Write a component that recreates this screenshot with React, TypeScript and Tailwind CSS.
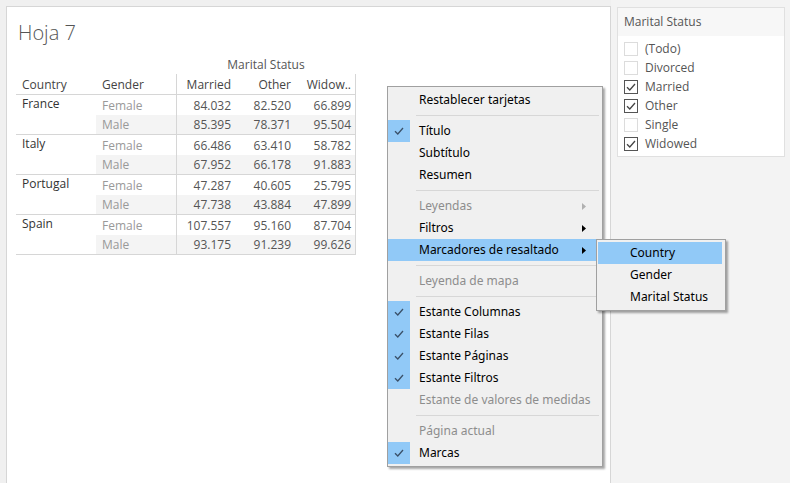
import React from "react";

const rows = [
  { country: "France", data: [["Female", "84.032", "82.520", "66.899"], ["Male", "85.395", "78.371", "95.504"]] },
  { country: "Italy", data: [["Female", "66.486", "63.410", "58.782"], ["Male", "67.952", "66.178", "91.883"]] },
  { country: "Portugal", data: [["Female", "47.287", "40.605", "25.795"], ["Male", "47.738", "43.884", "47.899"]] },
  { country: "Spain", data: [["Female", "107.557", "95.160", "87.704"], ["Male", "93.175", "91.239", "99.626"]] },
];

function Check({ className = "" }: { className?: string }) {
  return (
    <svg width="10" height="8" viewBox="0 0 10 8" className={className}>
      <path d="M1 4.2 L3.8 7 L9 1" fill="none" stroke="currentColor" strokeWidth="1.3" />
    </svg>
  );
}

function Arrow({ gray }: { gray?: boolean }) {
  return (
    <svg width="4" height="7" viewBox="0 0 4 7" className={gray ? "text-[#b0b0b0]" : "text-[#000]"}>
      <path d="M0 0 L4 3.5 L0 7 Z" fill="currentColor" />
    </svg>
  );
}

type Item =
  | { sep: true }
  | { label: string; checked?: boolean; disabled?: boolean; arrow?: boolean; active?: boolean; sep?: false };

const menu: Item[] = [
  { label: "Restablecer tarjetas" },
  { sep: true },
  { label: "Título", checked: true },
  { label: "Subtítulo" },
  { label: "Resumen" },
  { sep: true },
  { label: "Leyendas", disabled: true, arrow: true },
  { label: "Filtros", arrow: true },
  { label: "Marcadores de resaltado", arrow: true, active: true },
  { sep: true },
  { label: "Leyenda de mapa", disabled: true },
  { sep: true },
  { label: "Estante Columnas", checked: true },
  { label: "Estante Filas", checked: true },
  { label: "Estante Páginas", checked: true },
  { label: "Estante Filtros", checked: true },
  { label: "Estante de valores de medidas", disabled: true },
  { sep: true },
  { label: "Página actual", disabled: true },
  { label: "Marcas", checked: true },
];

const filters = [
  { label: "(Todo)", checked: false },
  { label: "Divorced", checked: false },
  { label: "Married", checked: true },
  { label: "Other", checked: true },
  { label: "Single", checked: false },
  { label: "Widowed", checked: true },
];

export default function App() {
  const menuFont = { fontFamily: "'Noto Sans', 'Open Sans', sans-serif" };
  return (
    <div
      className="relative flex w-[790px] h-[483px] overflow-hidden bg-[#f0f0f0]"
      style={{ fontFamily: "'Open Sans', 'Noto Sans', sans-serif" }}
    >
      {/* Sheet */}
      <div className="ml-[6px] mt-[6px] w-[605px] h-[477px] shrink-0 bg-white border-l border-t border-r border-[#d6d6d6] pl-[9px]">
        <div className="pl-[2px] pt-[14px] h-[47px] text-[20px] leading-[24px] font-light text-[#555]">Hoja 7</div>
        <div className="w-[340px] text-[12px] leading-[20px]">
          {/* Marital status header */}
          <div className="flex h-[20px] leading-[22px]">
            <div className="w-[160px]" />
            <div className="w-[180px] text-center text-[#555]">Marital Status</div>
          </div>
          {/* Column headers */}
          <div className="flex h-[21px] leading-[22px] border-b border-[#d6d6d6]">
            <div className="w-[80px] pl-[6px] text-[#444]">Country</div>
            <div className="w-[80px] pl-[6px] text-[#444]">Gender</div>
            <div className="w-[60px] border-l border-[#d6d6d6] text-right pr-[5px] text-[#444]">Married</div>
            <div className="w-[60px] text-right pr-[5px] text-[#444]">Other</div>
            <div className="w-[60px] border-r border-[#d6d6d6] text-right pr-[4px] text-[#444]">Widow..</div>
          </div>
          {rows.map((r) => (
            <div key={r.country} className="flex h-[40px] border-b border-[#d6d6d6]">
              <div className="w-[80px] pl-[6px] text-[#333] leading-[18px]">{r.country}</div>
              <div className="flex flex-col">
                {r.data.map((d, i) => (
                  <div key={i} className={`flex ${i === 1 ? "h-[19px] bg-[#f4f4f4] leading-[20px]" : "h-[20px] leading-[21px]"}`}>
                    <div className="w-[80px] pl-[6px] text-[#999]">{d[0]}</div>
                    <div className="w-[60px] border-l border-[#d6d6d6] text-right pr-[5px] text-[#555]">{d[1]}</div>
                    <div className="w-[60px] text-right pr-[5px] text-[#555]">{d[2]}</div>
                    <div className="w-[60px] border-r border-[#d6d6d6] text-right pr-[4px] text-[#555]">{d[3]}</div>
                  </div>
                ))}
              </div>
            </div>
          ))}
        </div>
      </div>

      {/* Right panel */}
      <div className="flex-1 bg-[#f3f3f3] pl-[6px] pt-[7px]">
        <div className="w-[168px] h-[150px] bg-white border border-[#e0e0e0] text-[12px]">
          <div className="h-[28px] bg-[#f7f7f7] pl-[6px] pt-[6px] leading-[16px] text-[#555]">Marital Status</div>
          <div className="pl-[6px] pt-[3px]">
            {filters.map((f) => (
              <div key={f.label} className="flex items-center h-[19px]">
                <div
                  className={`w-[14px] h-[14px] mr-[7px] flex items-center justify-center border ${
                    f.checked ? "border-[#555] text-[#444]" : "border-[#dcdcdc]"
                  }`}
                >
                  {f.checked && <Check />}
                </div>
                <span className="text-[#555] leading-[16px]">{f.label}</span>
              </div>
            ))}
          </div>
        </div>
      </div>

      {/* Context menu */}
      <div
        className="absolute left-[387px] top-[86px] w-[216px] bg-[#f0f0f0] border border-[#a0a0a0] py-[2px] shadow-[2px_2px_2px_rgba(0,0,0,0.35)] text-[12px] text-[#000]"
        style={menuFont}
      >
        {menu.map((it, i) =>
          it.sep ? (
            <div key={i} className="h-[9px] flex items-center pl-[28px] pr-[3px]">
              <div className="h-px w-full bg-[#d7d7d7]" />
            </div>
          ) : (
            <div
              key={i}
              className={`flex items-center h-[22px] mr-[6px] ${it.active ? "bg-[#91c9f7]" : ""}`}
            >
              <div
                className={`w-[22px] h-[22px] flex items-center justify-center ${
                  it.checked ? "bg-[#91c9f7] text-[#3a5068]" : ""
                }`}
              >
                {it.checked && <Check />}
              </div>
              <span className={`ml-[9px] flex-1 leading-[16px] ${it.disabled ? "text-[#8d8d8d]" : "text-[#000]"}`}>
                {it.label}
              </span>
              {it.arrow && (
                <div className="w-[14px] flex justify-start">
                  <Arrow gray={it.disabled} />
                </div>
              )}
            </div>
          )
        )}
      </div>

      {/* Submenu */}
      <div
        className="absolute left-[596px] top-[239px] w-[130px] bg-[#f0f0f0] border border-[#a0a0a0] px-[1px] py-[2px] shadow-[2px_2px_2px_rgba(0,0,0,0.35)] text-[12px] text-[#000]"
        style={menuFont}
      >
        {["Country", "Gender", "Marital Status"].map((s, i) => (
          <div key={s} className={`h-[22px] flex items-center pl-[32px] mr-[2px] ${i === 0 ? "bg-[#91c9f7]" : ""}`}>
            <span className="leading-[16px]">{s}</span>
          </div>
        ))}
      </div>
    </div>
  );
}
